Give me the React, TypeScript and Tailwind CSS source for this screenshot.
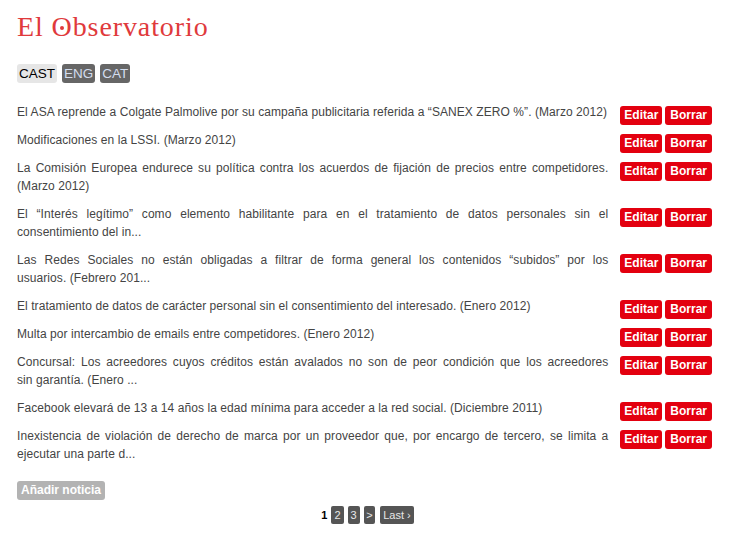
import React from "react";

// each entry: the lines as they break in the list column
const noticias: string[][] = [
  ["El ASA reprende a Colgate Palmolive por su campaña publicitaria referida a “SANEX ZERO %”. (Marzo 2012)"],
  ["Modificaciones en la LSSI. (Marzo 2012)"],
  ["La Comisión Europea endurece su política contra los acuerdos de fijación de precios entre competidores.", "(Marzo 2012)"],
  ["El “Interés legítimo” como elemento habilitante para en el tratamiento de datos personales sin el", "consentimiento del in..."],
  ["Las Redes Sociales no están obligadas a filtrar de forma general los contenidos “subidos” por los", "usuarios. (Febrero 201..."],
  ["El tratamiento de datos de carácter personal sin el consentimiento del interesado. (Enero 2012)"],
  ["Multa por intercambio de emails entre competidores. (Enero 2012)"],
  ["Concursal: Los acreedores cuyos créditos están avalados no son de peor condición que los acreedores", "sin garantía. (Enero ..."],
  ["Facebook elevará de 13 a 14 años la edad mínima para acceder a la red social. (Diciembre 2011)"],
  ["Inexistencia de violación de derecho de marca por un proveedor que, por encargo de tercero, se limita a", "ejecutar una parte d..."],
];

export default function App() {
  return (
    <div className="min-h-[537px] w-[732px] bg-white pl-[17px] pr-[20px] pt-[11px] font-['Liberation_Sans',Arial,sans-serif]">
      {/* Title */}
      <h1 className="font-['Liberation_Serif',serif] text-[28px] leading-[32px] tracking-[0.9px] text-[#e03a3c]">
        El{" "}
        <span className="relative inline-block">
          O
          <span className="absolute left-[calc(50%-0.45px)] top-[14.5px] h-[4px] w-[4px] -translate-x-1/2 rounded-full bg-[#e03a3c]"></span>
        </span>
        bservatorio
      </h1>

      {/* Language switch */}
      <div className="mt-[21px] flex gap-[5px] text-[13.5px] leading-[19px]">
        <span className="rounded-[3px] bg-[#e6e6e6] px-[2px] text-black">CAST</span>
        <span className="rounded-[3px] bg-[#666666] px-[2px] text-[#d3ddee]">ENG</span>
        <span className="rounded-[3px] bg-[#666666] px-[2px] text-[#d3ddee]">CAT</span>
      </div>

      {/* News list */}
      <ul className="mt-[20px]">
        {noticias.map((lines, i) => (
          <li key={i} className="mb-[10px] flex items-start gap-[12px]">
            <p className="flex-1 text-[12px] leading-[18px] tracking-[0.07px] text-[#444]">
              {lines.map((l, j) => (
                <span
                  key={j}
                  className={j < lines.length - 1 ? "block text-justify [text-align-last:justify]" : "block"}
                >
                  {l}
                </span>
              ))}
            </p>
            <div className="-mb-[4px] mt-[3px] flex gap-[3px] text-[12px] font-bold leading-[19px] text-white">
              <button className="rounded-[3px] bg-[#e3000f] px-[4px]">Editar</button>
              <button className="rounded-[3px] bg-[#e3000f] px-[5px]">Borrar</button>
            </div>
          </li>
        ))}
      </ul>

      {/* Add button */}
      <button className="mt-[18px] block rounded-[3px] bg-[#b3b3b3] px-[4px] text-[12px] font-bold leading-[19px] text-white">
        Añadir noticia
      </button>

      {/* Pagination */}
      <div className="ml-[6px] mt-[6px] flex items-center justify-center text-[11px] leading-[18px]">
        <span className="mr-[4px] font-bold text-black">1</span>
        <a className="mr-[4px] rounded-[2px] bg-[#555] px-[3px] text-[#e8e8e8]">2</a>
        <a className="mr-[4px] rounded-[2px] bg-[#555] px-[3px] text-[#e8e8e8]">3</a>
        <a className="mr-[5px] rounded-[2px] bg-[#555] px-[2.5px] text-[#e8e8e8]">&gt;</a>
        <a className="rounded-[2px] bg-[#555] px-[3px] text-[#e8e8e8]">Last ›</a>
      </div>
    </div>
  );
}
